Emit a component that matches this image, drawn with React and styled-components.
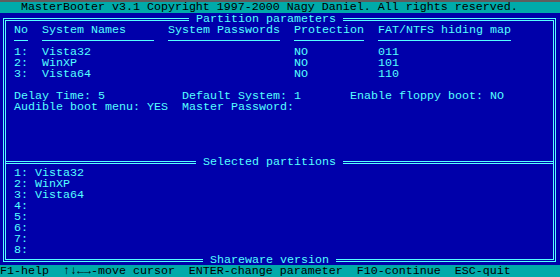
import React from 'react';
import styled, { createGlobalStyle } from 'styled-components';

const CYAN = '#55FFFF';
const BLUE = '#0000AA';
const TEAL = '#00AAAA';
const CELL = 7;
const LINE = 11;

const Global = createGlobalStyle`
  html, body { margin: 0; padding: 0; background: ${BLUE}; }
  body { width: 560px; height: 277px; overflow: hidden; }
`;

const Screen = styled.div`
  width: 560px;
  height: 277px;
  box-sizing: border-box;
  border-top: 2px solid #5e5e5e;
  background: ${BLUE};
  color: ${CYAN};
  font-family: "Liberation Mono", "DejaVu Sans Mono", monospace;
  font-size: 11.667px;
  display: flex;
  flex-direction: column;
`;

const Bar = styled.div`
  flex: none;
  background: ${TEAL};
  color: #000;
  height: ${(p) => p.$h}px;
  line-height: ${LINE}px;
  padding-left: ${(p) => p.$indent * CELL}px;
  padding-top: ${(p) => p.$h - LINE}px;
  box-sizing: border-box;
  white-space: pre;
  margin-top: ${(p) => (p.$bottom ? 'auto' : '0')};
`;

const Frame = styled.div`
  flex: none;
  position: relative;
  margin: 5px 0 0 3px;
  width: 553px;
  height: 244px;
  box-sizing: border-box;
  border: 3px double ${CYAN};
  padding: 3px 0 4px 0;
  display: flex;
  flex-direction: column;
`;

const Panel = styled.div`
  flex: none;
  height: ${(p) => p.$rows * LINE}px;
  display: flex;
  flex-direction: column;
`;

const Row = styled.div`
  flex: none;
  display: grid;
  grid-template-columns: repeat(78, ${CELL}px);
  padding: 1px 0 0 1px;
  box-sizing: border-box;
  height: ${LINE}px;
  line-height: ${LINE}px;
`;

const Field = styled.span`
  grid-row: 1;
  grid-column: ${(p) => p.$col} / span ${(p) => p.$span};
  white-space: pre;
`;

const Rule = styled.span`
  grid-row: 1;
  grid-column: ${(p) => p.$col} / span ${(p) => p.$len};
  align-self: start;
  margin-top: 4px;
  height: 1px;
  background: ${CYAN};
`;

const Divider = styled.div`
  flex: none;
  position: relative;
  height: ${LINE}px;
  &::before {
    content: '';
    position: absolute;
    left: 0;
    right: 0;
    top: 5px;
    border-top: 3px double ${CYAN};
  }
`;

const Caption = styled.span`
  position: absolute;
  left: ${(p) => p.$left}px;
  ${(p) => (p.$bottom != null ? `bottom: ${p.$bottom}px;` : `top: ${p.$top}px;`)}
  height: ${LINE}px;
  box-sizing: border-box;
  padding: 1px ${CELL}px 0;
  line-height: ${LINE}px;
  background: ${BLUE};
  white-space: pre;
  z-index: 1;
`;

const Text = ({ col, children }) => (
  <Field $col={col} $span={String(children).length}>
    {children}
  </Field>
);

const systems = [
  { n: 1, name: 'Vista32', prot: 'NO', map: '011' },
  { n: 2, name: 'WinXP', prot: 'NO', map: '101' },
  { n: 3, name: 'Vista64', prot: 'NO', map: '110' },
];

const columns = [
  { col: 2, label: 'No', len: 2 },
  { col: 6, label: 'System Names', len: 16 },
  { col: 24, label: 'System Passwords', len: 16 },
  { col: 42, label: 'Protection', len: 10 },
  { col: 54, label: 'FAT/NTFS hiding map', len: 19 },
];

const selected = ['Vista32', 'WinXP', 'Vista64', '', '', '', '', ''];

export default function App() {
  return (
    <>
      <Global />
      <Screen>
        <Bar $h={11} $indent={3}>MasterBooter v3.1 Copyright 1997-2000 Nagy Daniel. All rights reserved.</Bar>
        <Frame>
          <Caption $left={183} $top={-8}>Partition parameters</Caption>
          <Panel $rows={12}>
            <Row>
              {columns.map((c) => (
                <Text key={c.col} col={c.col}>{c.label}</Text>
              ))}
            </Row>
            <Row>
              {columns.map((c) => (
                <Rule key={c.col} $col={c.col} $len={c.len} />
              ))}
            </Row>
            {systems.map((s) => (
              <Row key={s.n}>
                <Text col={2}>{`${s.n}:`}</Text>
                <Text col={6}>{s.name}</Text>
                <Text col={42}>{s.prot}</Text>
                <Text col={54}>{s.map}</Text>
              </Row>
            ))}
            <Row />
            <Row>
              <Text col={2}>Delay Time: 5</Text>
              <Text col={26}>Default System: 1</Text>
              <Text col={50}>Enable floppy boot: NO</Text>
            </Row>
            <Row>
              <Text col={2}>Audible boot menu: YES</Text>
              <Text col={26}>Master Password:</Text>
            </Row>
          </Panel>
          <Divider>
            <Caption $left={190} $top={0}>Selected partitions</Caption>
          </Divider>
          <Panel $rows={8}>
            {selected.map((name, i) => (
              <Row key={i}>
                <Text col={2}>{`${i + 1}: ${name}`}</Text>
              </Row>
            ))}
          </Panel>
          <Caption $left={197} $bottom={-6}>Shareware version</Caption>
        </Frame>
        <Bar $h={12} $indent={0} $bottom>
          F1-help  ↑↓←→-move cursor  ENTER-change parameter  F10-continue  ESC-quit
        </Bar>
      </Screen>
    </>
  );
}
